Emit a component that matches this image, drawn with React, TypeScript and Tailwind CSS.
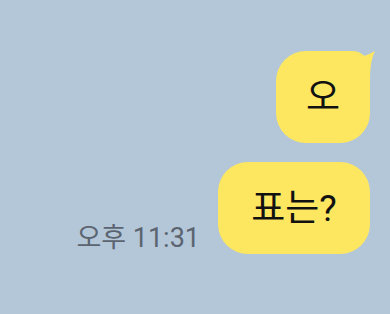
export default function App() {
  const font = { fontFamily: 'Roboto, "Noto Sans CJK KR", sans-serif' };
  return (
    <div
      className="w-[390px] h-[314px] bg-[#b4c7d9] overflow-hidden flex flex-col items-end pt-[51px] pr-[20px] gap-[19px]"
      style={font}
    >
      {/* 첫 번째 말풍선 (꼬리 포함) */}
      <div className="relative w-[94px] h-[92px]">
        <div className="w-full h-full rounded-[30px] rounded-tr-[18px] bg-[#fee760] flex items-center justify-center text-[37px] text-[#111] leading-none">
          오
        </div>
        <svg
          className="absolute top-0 left-[79px]"
          width="20"
          height="30"
          viewBox="0 0 20 30"
        >
          <path d="M0,6 C8,6 15,3 20,0 C17,6 15,14 15,30 L0,30 Z" fill="#fee760" />
        </svg>
      </div>

      {/* 두 번째 말풍선 + 시간 */}
      <div className="flex items-end gap-[18px]">
        <span className="text-[27px] text-[#5b6470] leading-none pb-[2px]">오후 11:31</span>
        <div className="w-[152px] h-[92px] rounded-[30px] bg-[#fee760] flex items-center justify-center text-[37px] text-[#111] leading-none">
          표는?
        </div>
      </div>
    </div>
  );
}
